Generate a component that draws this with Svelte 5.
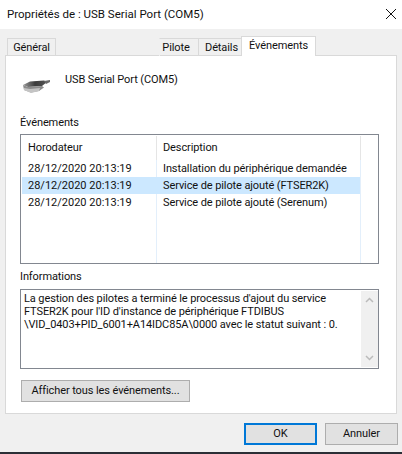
<script>
	const rows = [
		{ time: '28/12/2020 20:13:19', text: 'Installation du périphérique demandée' },
		{ time: '28/12/2020 20:13:19', text: 'Service de pilote ajouté (FTSER2K)', selected: true },
		{ time: '28/12/2020 20:13:19', text: 'Service de pilote ajouté (Serenum)' }
	];
</script>

<div class="dialog">
	<header class="titlebar">
		<span>Propriétés de : USB Serial Port (COM5)</span>
		<svg class="close" width="10" height="10" viewBox="0 0 10 10">
			<path d="M0 0L10 10M10 0L0 10" stroke="#111" stroke-width="1" fill="none" />
		</svg>
	</header>

	<nav class="tabs">
		<div class="tab general">Général</div>
		<div class="spacer"></div>
		<div class="tab pilote">Pilote</div>
		<div class="tab details">Détails</div>
		<div class="tab active">Événements</div>
	</nav>

	<section class="panel">
		<div class="device">
			<svg class="icon" width="32" height="20" viewBox="0 0 32 20">
				<defs>
					<linearGradient id="body" x1="0" y1="0" x2="1" y2="0">
						<stop offset="0" stop-color="#9a9a9a" />
						<stop offset="0.5" stop-color="#3c3c3c" />
						<stop offset="1" stop-color="#555" />
					</linearGradient>
				</defs>
				<path d="M3 7L10 3.5L24 2.5L27 4L22 8L8 9Z" fill="url(#body)" />
				<path d="M3 7L8 9L22 8L24 9.5L19 13L11 14.5L4 12Z" fill="#8c8c8c" />
				<path d="M4 10L10 11L20 10L19 13L11 15L4 12Z" fill="#c4c4c4" />
				<path d="M24 3L30 2V4L26 6Z" fill="#6a6a6a" />
			</svg>
			<span>USB Serial Port (COM5)</span>
		</div>

		<h2>Événements</h2>
		<div class="list">
			<div class="row head">
				<span class="col-time">Horodateur</span>
				<span class="col-text">Description</span>
			</div>
			{#each rows as row}
				<div class="row" class:selected={row.selected}>
					<span class="col-time date">{row.time}</span>
					<span class="col-text">{row.text}</span>
				</div>
			{/each}
		</div>

		<h2 class="info-label">Informations</h2>
		<div class="info">
			<p>La gestion des pilotes a terminé le processus d'ajout du service<br />FTSER2K pour l'ID d'instance de périphérique FTDIBUS<br />\VID_0403+PID_6001+A14IDC85A\0000 avec le statut suivant : 0.</p>
			<div class="scrollbar">
				<svg width="9" height="6" viewBox="0 0 9 6"><path d="M1 5L4.500 1.500L8 5" stroke="#bbb" stroke-width="1.500" fill="none" /></svg>
				<svg width="9" height="6" viewBox="0 0 9 6"><path d="M1 1L4.500 4.500L8 1" stroke="#bbb" stroke-width="1.500" fill="none" /></svg>
			</div>
		</div>

		<button class="btn all">Afficher tous les événements...</button>
	</section>

	<footer class="actions">
		<button class="btn ok">OK</button>
		<button class="btn">Annuler</button>
	</footer>
	<div class="taskbar"></div>
</div>

<style>
	:global(body) {
		margin: 0;
		background: #f0f0f0;
	}

	.dialog {
		width: 402px;
		height: 454px;
		display: flex;
		flex-direction: column;
		background: #f0f0f0;
		color: #111;
		font: 11px/16px Roboto, sans-serif;
		letter-spacing: -0.1px;
		overflow: hidden;
	}

	.titlebar {
		height: 29px;
		flex: none;
		box-sizing: border-box;
		background: #fff;
		display: flex;
		align-items: center;
		justify-content: space-between;
		padding: 0 6px 2px 7px;
		font-size: 11.5px;
		letter-spacing: 0;
	}

	.tabs {
		height: 20px;
		margin-top: 7px;
		padding-left: 7px;
		flex: none;
		display: flex;
		align-items: flex-end;
		position: relative;
		z-index: 1;
		margin-bottom: -1px;
	}

	.spacer {
		width: 104px;
	}

	.tab {
		box-sizing: border-box;
		height: 18px;
		line-height: 18px;
		border: 1px solid #d9d9d9;
		border-bottom: none;
		margin-left: -1px;
		text-align: center;
	}

	.tab.general {
		width: 49px;
		margin-left: 0;
	}

	.tab.pilote {
		width: 40px;
		padding-right: 6px;
		border-left-color: #f0f0f0;
	}

	.tab.details {
		width: 44px;
		padding-left: 3px;
	}

	.tab.active {
		width: 75px;
		height: 20px;
		line-height: 17px;
		background: #fff;
	}

	.panel {
		box-sizing: border-box;
		width: 392px;
		height: 359px;
		margin-left: 5px;
		flex: none;
		background: #fff;
		border: 1px solid #d9d9d9;
		padding: 15px 17px 0 14px;
		display: flex;
		flex-direction: column;
		align-items: flex-start;
	}

	.device {
		height: 28px;
		display: flex;
		gap: 12px;
	}

	.icon {
		margin-top: 7px;
	}

	.device span {
		margin: 1px 0 0 1px;
	}

	h2 {
		font: inherit;
		margin: 16px 0 3px;
	}

	.list {
		box-sizing: border-box;
		width: 359px;
		height: 130px;
		border: 1px solid #828790;
		padding-top: 1px;
		background: linear-gradient(#e5e5e5, #e5e5e5) 135px 1px / 1px 24px no-repeat,
			linear-gradient(#e3effb, #e3effb) 135px 1px / 1px 127px no-repeat,
			linear-gradient(#e5e5e5, #e5e5e5) 339px 1px / 1px 24px no-repeat,
			linear-gradient(#e3effb, #e3effb) 339px 1px / 1px 127px no-repeat;
	}

	.row {
		width: 338px;
		height: 17px;
		margin-left: 1px;
		display: flex;
		line-height: 17px;
		white-space: nowrap;
	}

	.row.head {
		height: 24px;
		line-height: 23px;
	}

	.row.selected {
		background: #cce8ff;
	}

	.col-time {
		width: 135px;
		flex: none;
		padding-left: 6px;
		box-sizing: border-box;
	}

	.date {
		letter-spacing: 0;
	}

	.col-text {
		padding-left: 6px;
	}

	h2.info-label {
		margin: 5px 0 4px;
	}

	.info {
		box-sizing: border-box;
		width: 359px;
		height: 80px;
		border: 1px solid #828790;
		display: flex;
		justify-content: space-between;
	}

	.info p {
		margin: 2px 0 0 3px;
		line-height: 13px;
		white-space: nowrap;
	}

	.scrollbar {
		width: 17px;
		margin: 1px 0;
		background: #f0f0f0;
		display: flex;
		flex-direction: column;
		justify-content: space-between;
		align-items: center;
		padding: 6px 0;
		box-sizing: border-box;
	}

	.scrollbar svg {
		display: block;
	}

	.btn {
		box-sizing: border-box;
		width: 73px;
		height: 22px;
		padding: 0;
		background: #e1e1e1;
		border: 1px solid #adadad;
		color: inherit;
		font: inherit;
		letter-spacing: inherit;
	}

	.btn.all {
		width: 169px;
		margin: 11px 0 0 1px;
	}

	.actions {
		display: flex;
		justify-content: flex-end;
		gap: 8px;
		height: 22px;
		margin-top: 9px;
		padding-right: 4px;
		flex: none;
	}

	.btn.ok {
		border: 2px solid #0078d7;
	}

	.taskbar {
		height: 2px;
		margin-top: auto;
		background: #2b2f36;
		flex: none;
	}
</style>
